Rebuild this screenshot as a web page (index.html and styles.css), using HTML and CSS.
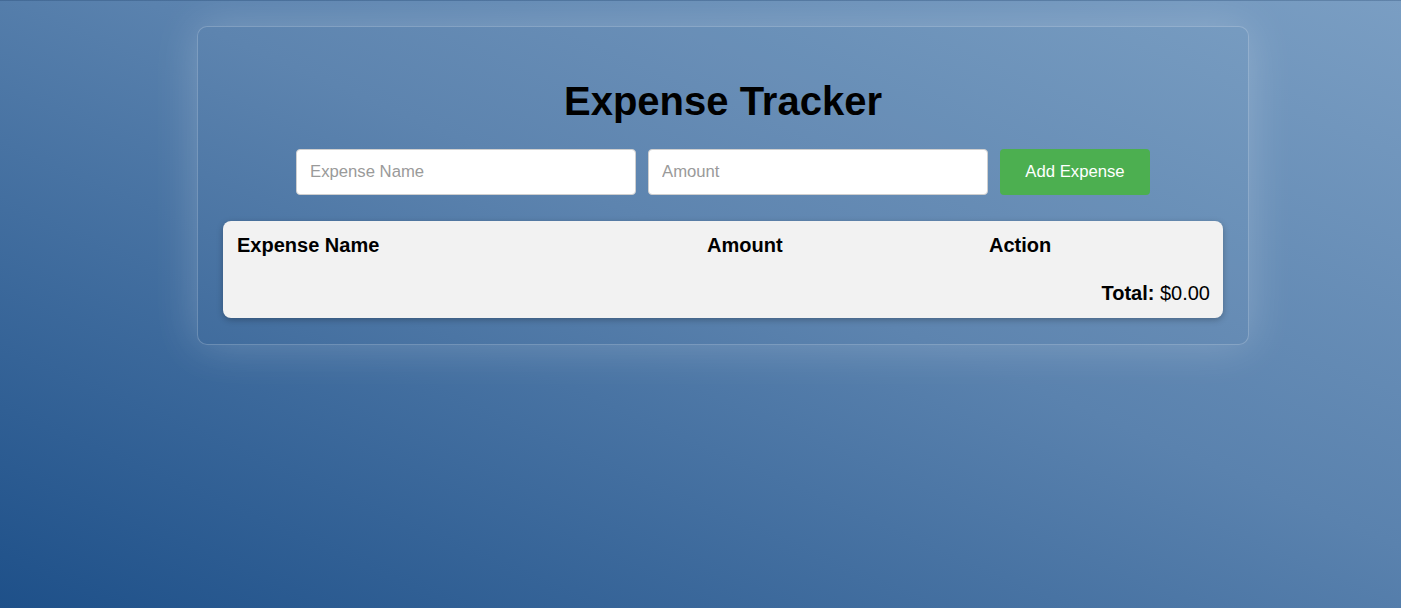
FILE: index.html
```html
<!DOCTYPE html>
<html lang="en">
<head>
<meta charset="utf-8">
<title>Expense Tracker</title>
<link rel="stylesheet" href="styles.css">
</head>
<body>
  <div class="container">
    <h1 class="title">Expense Tracker</h1>
    <div class="form-row">
      <input class="field" type="text" placeholder="Expense Name">
      <input class="field" type="number" placeholder="Amount">
      <button class="add-btn" type="button">Add Expense</button>
    </div>
    <div class="card">
      <table class="expense-table">
        <colgroup>
          <col class="col-name">
          <col class="col-amount">
          <col class="col-action">
        </colgroup>
        <thead>
          <tr>
            <th>Expense Name</th>
            <th>Amount</th>
            <th>Action</th>
          </tr>
        </thead>
        <tbody></tbody>
        <tfoot>
          <tr>
            <td class="total" colspan="3"><strong>Total:</strong> $0.00</td>
          </tr>
        </tfoot>
      </table>
    </div>
  </div>
</body>
</html>
```
FILE: styles.css
```css
html {
  height: 100%;
}
body {
  margin: 0;
  min-height: 100%;
  box-sizing: border-box;
  padding: 25px 0 0 45px;
  border-top: 1px solid rgba(20, 50, 90, 0.25);
  background: linear-gradient(to top right, #1e5089 0%, #5a82ae 55%, #7a9ec3 100%);
  font-family: "Liberation Sans", Arial, sans-serif;
  color: #000;
}
.container {
  width: 1000px;
  margin: 0 auto;
  padding: 25px 25px 26px;
  border: 1px solid rgba(255, 255, 255, 0.22);
  border-radius: 10px;
  background: rgba(255, 255, 255, 0.02);
  box-shadow: 0 0 45px rgba(255, 255, 255, 0.22);
}
.title {
  margin: 27px 0 25px;
  text-align: center;
  font-size: 40px;
  font-weight: bold;
}
.form-row {
  display: flex;
  justify-content: center;
  gap: 12px;
  margin-bottom: 26px;
}
.field {
  width: 340px;
  height: 46px;
  box-sizing: border-box;
  padding: 0 13px;
  border: 1px solid #cfcfcf;
  border-radius: 4px;
  background: #fff;
  font-family: "Liberation Sans", Arial, sans-serif;
  font-size: 16.7px;
  color: #222;
  outline: none;
}
.field::placeholder {
  color: #9a9a9a;
}
.add-btn {
  width: 150px;
  height: 46px;
  border: none;
  border-radius: 4px;
  background: #4caf50;
  color: #fff;
  font-family: "Liberation Sans", Arial, sans-serif;
  font-size: 16.7px;
  cursor: pointer;
}
.card {
  background: #f2f2f2;
  border-radius: 8px;
  box-shadow: 0 2px 6px rgba(0, 0, 0, 0.25);
  overflow: hidden;
}
.expense-table {
  width: 100%;
  border-collapse: collapse;
  table-layout: fixed;
  font-size: 20px;
}
.col-name { width: 470px; }
.col-amount { width: 282px; }
.col-action { width: 248px; }
.expense-table th {
  text-align: left;
  font-weight: bold;
  padding: 13px 14px 11px;
  line-height: 23px;
}
.total {
  text-align: right;
  padding: 14px 13px 13px;
  line-height: 23px;
}
```
